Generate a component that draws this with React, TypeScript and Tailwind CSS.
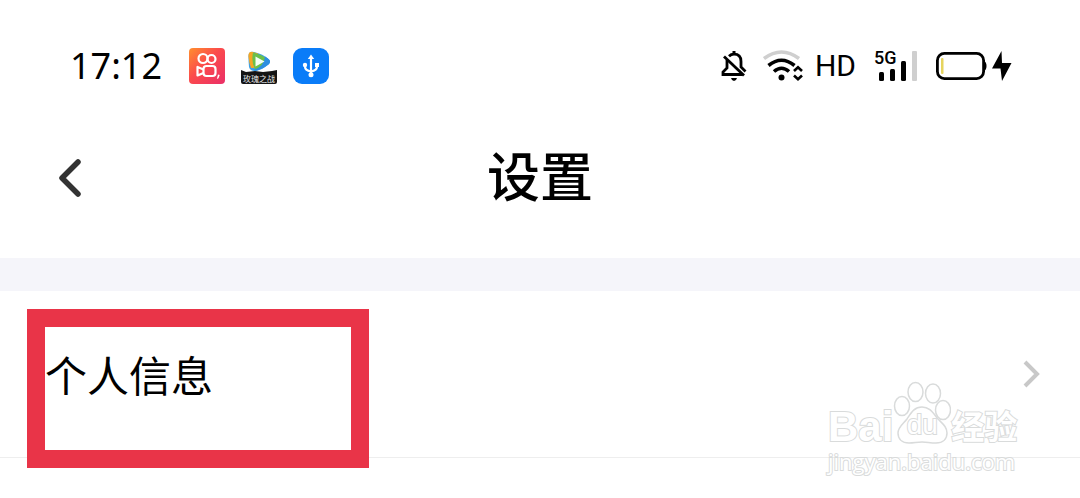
import type { ReactNode } from "react"

const notoSC = "font-['Noto_Sans_CJK_SC','Noto_Sans',sans-serif]"

function KuaishouIcon() {
  return (
    <svg viewBox="0 0 36 36" className="size-9" aria-hidden="true">
      <defs>
        <linearGradient id="ks" x1="0" y1="0" x2="1" y2="1">
          <stop offset="0" stopColor="#ff8f2e" />
          <stop offset="0.45" stopColor="#fb4a4c" />
          <stop offset="1" stopColor="#ea2f68" />
        </linearGradient>
      </defs>
      <rect width="36" height="36" rx="4" fill="url(#ks)" />
      <g fill="none" stroke="#fff" strokeWidth="2.2">
        <circle cx="14" cy="10.500" r="4.500" />
        <circle cx="22.500" cy="11" r="4" />
        <rect x="14.500" y="18" width="12" height="10" rx="3" />
        <path d="M14.500 21.500l-6-2.500v8.500l6-2.500" strokeLinejoin="round" />
      </g>
      <path d="M29 26.500l1.700.6-1.200 3.200-1.600.6z" fill="#fff" />
    </svg>
  )
}

function VideoIcon() {
  return (
    <svg viewBox="0 0 36 36" className="size-9" aria-hidden="true">
      <path d="M7.500 9Q7 3 13 4q9 2 14.500 7 3 2.500 0 5.500Q21 22 14 23q-5 0-6-4-.5-5-.5-10z" fill="#3aa0e8" />
      <path d="M7.500 9Q7 3 12 4l5 1.500v14L10 20Q8 15 7.500 9z" fill="#f5a623" />
      <path d="M12 4.500q9 2 14 6.500 3 2.500 0 5-5 4-12 5.500-4-8-2-17z" fill="#6cc04a" />
      <path d="M24 8.500q3 1.500 4.500 3.500t-1 4.500Q22 21 15 23l-3-1q11-3 12-13.500z" fill="#2d8fe0" />
      <path d="M14.500 8.500l9 5-9 5z" fill="#f4fff4" />
      <path d="M0 22l5 2 9-1 8 1 9-1 5-1v12q0 2-2 2H2q-2 0-2-2z" fill="#151515" />
      <text x="18" y="34" textAnchor="middle" fontSize="8" fill="#e8e8e8" fontFamily="'Noto Sans CJK SC', sans-serif">
        玫瑰之战
      </text>
    </svg>
  )
}

function UsbIcon() {
  return (
    <svg viewBox="0 0 36 36" className="size-9" aria-hidden="true">
      <rect width="36" height="36" rx="9" fill="#0a7cf8" />
      <g fill="none" stroke="#fff" strokeWidth="2.200">
        <path d="M18 9v18" />
        <path d="M12 17v1.500q0 4 6 5 6-1 6-5V17" />
      </g>
      <path d="M18 6.500l3.200 4.500h-6.400z" fill="#fff" />
      <circle cx="12" cy="17" r="2.200" fill="#fff" />
      <rect x="22" y="15" width="4" height="4" fill="#fff" />
      <circle cx="18" cy="26.800" r="2.500" fill="#fff" />
    </svg>
  )
}

function MutedBellIcon() {
  return (
    <svg viewBox="0 0 26 32" className="h-8 w-[26px]" fill="none" stroke="#000" strokeWidth="2.800" aria-hidden="true">
      <path d="M8 6.200Q10 4.200 13 4.200q7 0 7 7.300v5.500l4.500 4.500" />
      <path d="M6 10v8l-4 4v2.500h19.500" />
      <path d="M3 6.500l20 19" />
      <path d="M13 1v3" strokeWidth="3" />
      <path d="M10 28h6q-.8 3-3 3t-3-3z" fill="#000" stroke="none" />
    </svg>
  )
}

function WifiIcon() {
  return (
    <svg viewBox="0 0 40 32" className="h-8 w-10" fill="none" stroke="#000" strokeWidth="3.600" aria-hidden="true">
      <path d="M1 8.500q17.500-13 35 0" stroke="#cfcfcf" />
      <path d="M5.500 15.500q13-10.500 26 0" />
      <path d="M11 21.500q7.500-6.500 15 0" />
      <circle cx="18.500" cy="27.500" r="3" fill="#000" stroke="none" />
      <path d="M31 21l4-3.800 4 3.800M31 25.500l4 3.800 4-3.800" strokeWidth="2.600" />
    </svg>
  )
}

function SignalBars() {
  return (
    <svg viewBox="0 0 40 30" className="h-[30px] w-10" aria-hidden="true">
      <rect x="1" y="21" width="5" height="9" rx="1.500" />
      <rect x="12" y="18" width="5" height="12" rx="1.500" />
      <rect x="23" y="10" width="5" height="20" rx="1.500" />
      <rect x="34" y="0" width="5" height="30" rx="1" fill="#cfcfcf" />
    </svg>
  )
}

function BatteryIcon() {
  return (
    <svg viewBox="0 0 76 30" className="h-[30px] w-[76px]" aria-hidden="true">
      <rect x="1.400" y="2.400" width="46.200" height="25.200" rx="7" fill="none" stroke="#000" strokeWidth="2.800" />
      <rect x="5" y="7" width="2.500" height="16" rx="1" fill="#e6d45e" />
      <path d="M48 10q2.500 1 2.500 5t-2.500 5z" />
      <path d="M65.500 0L56 17.500h8.500L66 30l9.500-18H66z" />
    </svg>
  )
}

function StatusBar() {
  return (
    <div className="flex items-center justify-between pt-[34px] pr-[68px] pl-[70px]">
      <div className="flex h-16 items-center gap-4">
        <span className="w-[103px] font-['Noto_Sans',sans-serif] text-[36px] leading-none">17:12</span>
        <KuaishouIcon />
        <VideoIcon />
        <UsbIcon />
      </div>
      <div className="flex h-16 items-center gap-4">
        <MutedBellIcon />
        <WifiIcon />
        <div className="flex items-center gap-[18px]">
          <span className="-ml-1 font-['Roboto',sans-serif] text-[30px] leading-none">HD</span>
          <div className="relative pl-1">
            <SignalBars />
            <span className="absolute -top-0.5 left-0 font-['Roboto',sans-serif] text-[18px] leading-none font-medium">
              5G
            </span>
          </div>
          <BatteryIcon />
        </div>
      </div>
    </div>
  )
}

function Header() {
  return (
    <header className="grid h-40 grid-cols-[1fr_auto_1fr] items-center px-14">
      <button type="button" aria-label="返回" className="w-7">
        <svg viewBox="0 0 28 42" className="h-[42px] w-7" fill="none" stroke="#333" strokeWidth="5.500" strokeLinecap="round" strokeLinejoin="round">
          <path d="M22 5L6 21l16 16" />
        </svg>
      </button>
      <h1 className={`${notoSC} pb-2 text-[53px] leading-none font-medium`}>设置</h1>
    </header>
  )
}

function SettingRow({ children }: { children: ReactNode }) {
  return (
    <a href="#profile" className="flex h-[167px] items-center justify-between border-b border-[#eeeeee] pr-10 pl-[45px]">
      <span className={`${notoSC} text-[42px] leading-none`}>{children}</span>
      <svg viewBox="0 0 18 28" className="h-7 w-[18px]" fill="none" stroke="#c8c8c8" strokeWidth="4" aria-hidden="true">
        <path d="M3 2l12 12L3 26" />
      </svg>
    </a>
  )
}

const outlined = "text-white [-webkit-text-stroke:2px_#d9dbdb] [paint-order:stroke_fill]"

function Watermark() {
  return (
    <div className="pointer-events-none absolute top-[90px] right-[58px] w-[194px]">
      <div className="flex items-end">
        <span className={`${outlined} font-['Liberation_Sans',sans-serif] text-[42px] leading-10 font-bold`}>Bai</span>
        <div className="relative h-[66px] w-[58px] shrink-0">
          <svg viewBox="0 0 58 66" className="h-full w-full" fill="#fff" stroke="#d9dbdb" strokeWidth="1.500" aria-hidden="true">
            <ellipse cx="9" cy="25" rx="7.500" ry="9.500" />
            <ellipse cx="22.500" cy="11" rx="7.500" ry="9.500" />
            <ellipse cx="40" cy="12.500" rx="7.500" ry="9.500" />
            <ellipse cx="50" cy="29" rx="7.500" ry="9.500" />
            <path d="M29 26c8 0 11 6 16 12 5 5 9 8 9 14s-4 10-11 10c-6 0-9-1-14-1s-8 1-13 1C9 62 5 58 5 52s5-9 9-14c4-6 7-12 15-12z" />
          </svg>
          <span className={`${outlined} absolute inset-x-0 bottom-2 text-center font-['Liberation_Sans',sans-serif] text-[28px] leading-7`}>
            du
          </span>
        </div>
        <span className={`${outlined} ${notoSC} text-[33px] leading-[44px] font-bold whitespace-nowrap`}>经验</span>
      </div>
      <p className={`${outlined} font-['Open_Sans',sans-serif] text-[22px] leading-7`}>jingyan.baidu.com</p>
    </div>
  )
}

export default function App() {
  return (
    <div className="min-h-screen bg-white text-black">
      <StatusBar />
      <Header />
      <div className="h-[33px] bg-[#f5f5fa]" />
      <main className="relative">
        <SettingRow>个人信息</SettingRow>
        <div className="pointer-events-none absolute top-[18px] left-[27px] h-[159px] w-[342px] border-[18px] border-[#e93448]" />
        <Watermark />
      </main>
    </div>
  )
}
